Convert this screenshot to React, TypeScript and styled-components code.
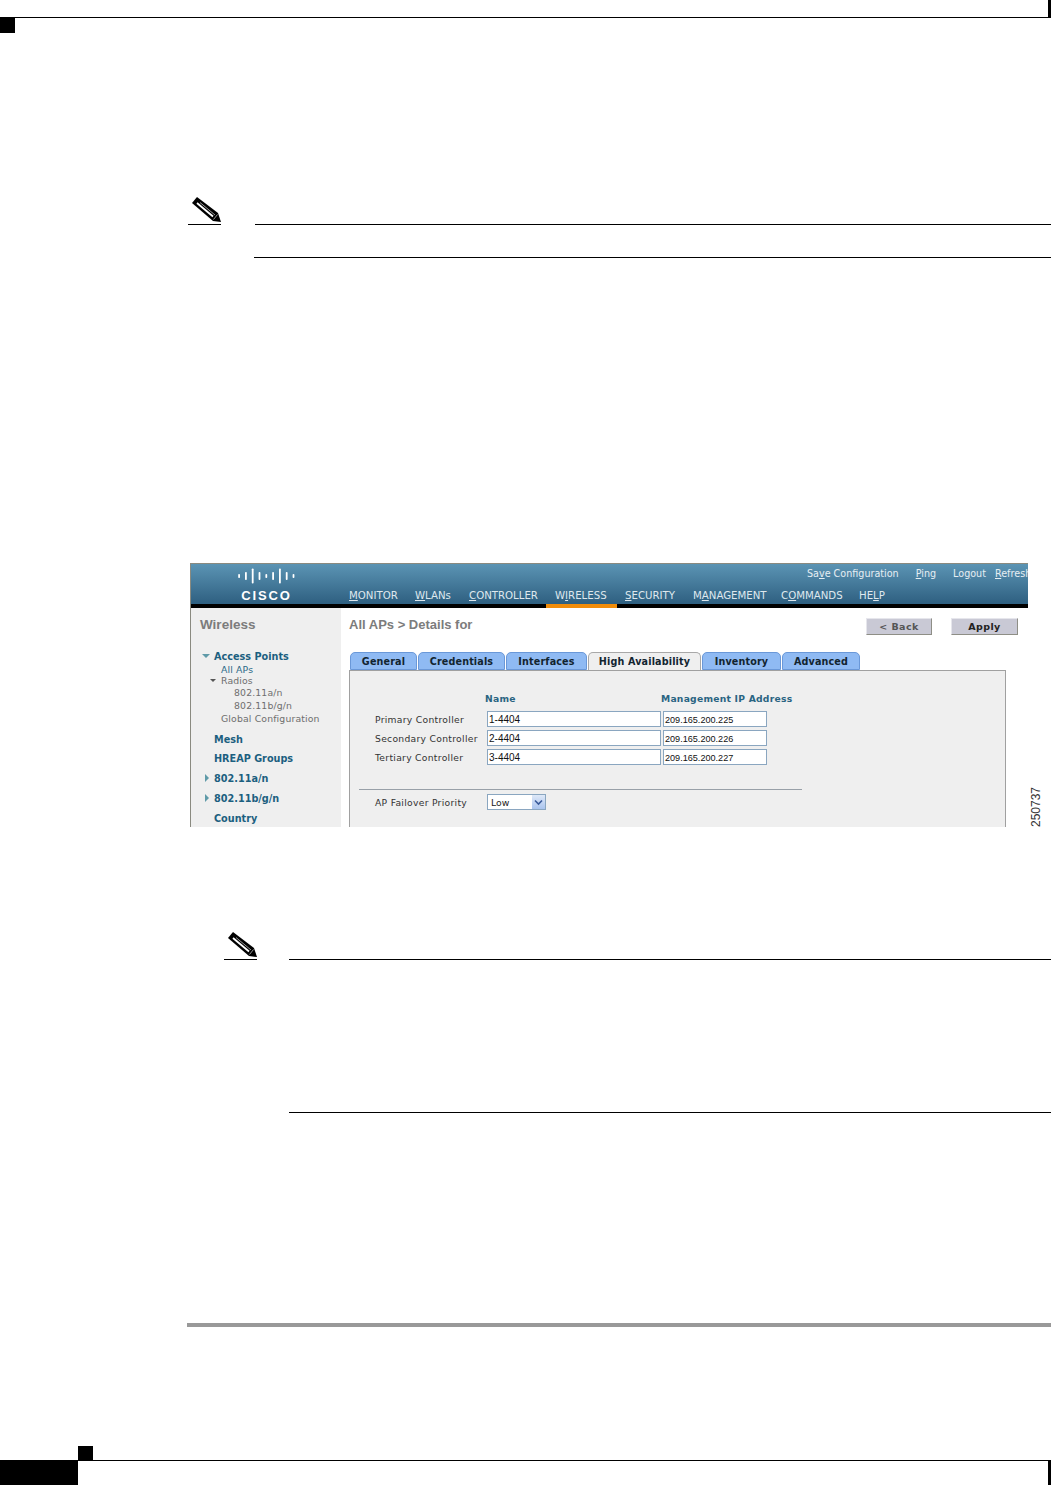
import React from "react";
import styled, { createGlobalStyle } from "styled-components";

const Global = createGlobalStyle`
  html, body { margin: 0; padding: 0; background: #fff; }
  body { font-family: "DejaVu Sans", Verdana, sans-serif; }
`;

const Page = styled.div`
  width: 1051px;
  height: 1485px;
  display: flex;
  flex-direction: column;
  overflow: hidden;
  background: #fff;
`;
const TopBand = styled.div`
  height: 17px;
  display: flex;
  justify-content: flex-end;
`;
const TopRule = styled.div`
  height: 1px;
  background: #000;
`;
const Square = styled.div<{ $left?: number; $h: number; $top?: number }>`
  width: 15px;
  height: ${(p) => p.$h}px;
  margin-left: ${(p) => p.$left ?? 0}px;
  margin-top: ${(p) => p.$top ?? 0}px;
  background: #000;
`;
const Note = styled.div<{ $top: number; $left: number; $h: number }>`
  margin-top: ${(p) => p.$top}px;
  margin-left: ${(p) => p.$left}px;
  height: ${(p) => p.$h}px;
  display: flex;
  align-items: flex-start;
`;
const NoteMark = styled.div`
  width: 33px;
  flex: none;
  height: 28px;
  border-bottom: 1px solid #000;
  box-sizing: border-box;
  svg { display: block; }
`;
const NoteRules = styled.div<{ $gap: number; $left: number }>`
  flex: 1;
  margin-left: ${(p) => p.$left}px;
  margin-top: 27px;
  display: flex;
  flex-direction: column;
  gap: ${(p) => p.$gap}px;
`;
const Rule = styled.div<{ $shift?: number }>`
  height: 1px;
  background: #000;
  margin-left: ${(p) => p.$shift ?? 0}px;
`;
const Figure = styled.div`
  margin-top: 305px;
  margin-left: 190px;
  display: flex;
  align-items: flex-end;
`;
const Shot = styled.div`
  width: 838px;
  height: 264px;
  flex: none;
  display: flex;
  flex-direction: column;
  overflow: hidden;
  border-left: 1px solid #8a8a80;
  border-top: 1px solid #8a8a80;
  box-sizing: border-box;
  background: #fff;
`;
const FigureId = styled.div`
  writing-mode: vertical-rl;
  transform: rotate(180deg);
  font: 12px/12px "Liberation Sans", Arial, sans-serif;
  color: #333;
  margin-left: 2px;
  height: 42px;
`;
const Header = styled.div`
  height: 40px;
  flex: none;
  display: flex;
  background: linear-gradient(#5b94b4, #2e5f80);
`;
const LogoCell = styled.div`
  width: 150px;
  flex: none;
  display: flex;
  flex-direction: column;
  align-items: center;
  padding-top: 4px;
  box-sizing: border-box;
  color: #fff;
  svg { display: block; }
`;
const LogoText = styled.div`
  font: bold 13px/14px "Liberation Sans", Arial, sans-serif;
  letter-spacing: 1.9px;
  margin-top: 5px;
  margin-left: 1px;
`;
const HeaderRight = styled.div`
  flex: 1;
  min-width: 0;
  display: flex;
  flex-direction: column;
`;
const TopLinks = styled.div`
  height: 19px;
  display: flex;
  align-items: center;
  padding-left: 466px;
  white-space: nowrap;
  color: #e6eef3;
  font-size: 9.6px;
`;
const TopSep = styled.span<{ $w: number }>`
  display: inline-block;
  width: 1px;
  height: 10px;
  background: #a9c6d6;
  margin: 0 ${(p) => p.$w}px;
`;
const Nav = styled.div`
  display: flex;
  height: 21px;
`;
const NavItem = styled.div<{ $w: number }>`
  width: ${(p) => p.$w}px;
  flex: none;
  padding-left: 8px;
  box-sizing: border-box;
  font-size: 10.2px;
  line-height: 25px;
  color: #dfe8ee;
  white-space: nowrap;
`;
const U = styled.span`
  text-decoration: underline;
`;
const NavStrip = styled.div`
  height: 4px;
  flex: none;
  background: #000;
  display: flex;
`;
const StripActive = styled.div`
  width: 71px;
  margin-left: 355px;
  background: #f08c0a;
`;
const Body = styled.div`
  flex: 1;
  min-height: 0;
  display: flex;
`;
const Side = styled.div`
  width: 150px;
  flex: none;
  background: #efefef;
  padding-top: 8px;
  box-sizing: border-box;
  overflow: hidden;
`;
const SideTitle = styled.div`
  font: bold 13.5px/18px "Liberation Sans", Arial, sans-serif;
  color: #7c7c7c;
  padding-left: 9px;
  height: 33px;
`;
const SideItem = styled.div<{ $indent: number; $h: number; $tone: "main" | "link" | "sub"; $top?: number }>`
  display: flex;
  align-items: center;
  height: ${(p) => p.$h}px;
  margin-top: ${(p) => p.$top ?? 0}px;
  padding-left: ${(p) => p.$indent}px;
  font-size: ${(p) => (p.$tone === "main" ? "9.7px" : "9.3px")};
  font-weight: ${(p) => (p.$tone === "main" ? 700 : 400)};
  letter-spacing: ${(p) => (p.$tone === "main" ? "0" : "0.15px")};
  color: ${(p) => (p.$tone === "main" ? "#1c5f80" : p.$tone === "link" ? "#2c6a88" : "#6e6e6e")};
  white-space: nowrap;
`;
const Caret = styled.span<{ $dir: "down" | "right"; $color: string; $size: number; $gap: number }>`
  width: 0;
  height: 0;
  flex: none;
  margin-left: ${(p) => -(p.$gap + (p.$dir === "down" ? p.$size * 2 : p.$size))}px;
  margin-right: ${(p) => p.$gap}px;
  ${(p) =>
    p.$dir === "down"
      ? `border-left:${p.$size}px solid transparent;border-right:${p.$size}px solid transparent;border-top:${p.$size}px solid ${p.$color};`
      : `border-top:${p.$size}px solid transparent;border-bottom:${p.$size}px solid transparent;border-left:${p.$size}px solid ${p.$color};`}
`;
const Main = styled.div`
  flex: 1;
  min-width: 0;
  padding-left: 8px;
  display: flex;
  flex-direction: column;
`;
const TitleRow = styled.div`
  height: 44px;
  flex: none;
  display: flex;
  align-items: flex-start;
`;
const Title = styled.div`
  font: bold 13px/18px "Liberation Sans", Arial, sans-serif;
  color: #7c7c7c;
  margin-top: 8px;
  width: 517px;
  flex: none;
`;
const Btn = styled.div<{ $dark?: boolean; $gap: number; $w: number }>`
  width: ${(p) => p.$w}px;
  height: 17px;
  margin-top: 10px;
  margin-left: ${(p) => p.$gap}px;
  box-sizing: border-box;
  background: #c9c9d5;
  border-top: 1px solid #e6e6ec;
  border-left: 1px solid #e6e6ec;
  border-right: 1px solid #8e8e86;
  border-bottom: 1px solid #8e8e86;
  display: flex;
  align-items: center;
  justify-content: center;
  font-size: 9.5px;
  font-weight: 700;
  letter-spacing: 0.4px;
  color: ${(p) => (p.$dark ? "#222" : "#555")};
`;
const Tabs = styled.div`
  height: 18px;
  flex: none;
  display: flex;
  padding-left: 1px;
  gap: 1px;
`;
const Tab = styled.div<{ $w: number; $active?: boolean }>`
  width: ${(p) => p.$w}px;
  flex: none;
  box-sizing: border-box;
  border: 1px solid ${(p) => (p.$active ? "#a8a8a8" : "#6a98d8")};
  border-bottom: ${(p) => (p.$active ? "none" : "1px solid #6a98d8")};
  border-radius: 5px 5px 0 0;
  background: ${(p) => (p.$active ? "#efefef" : "#8fbaf3")};
  font-size: 9.6px;
  font-weight: 700;
  line-height: 17px;
  text-align: center;
  letter-spacing: 0.15px;
  color: #12242f;
  white-space: nowrap;
`;
const Panel = styled.div`
  width: 657px;
  flex: 1;
  box-sizing: border-box;
  background: #efefef;
  border-left: 1px solid #a0a0a0;
  border-right: 1px solid #a0a0a0;
  border-top: 1px solid #a0a0a0;
  padding-top: 22px;
`;
const Grid = styled.div`
  display: grid;
  grid-template-columns: 110px 174px 104px;
  column-gap: 2px;
  row-gap: 3px;
  margin-left: 25px;
  align-items: center;
`;
const ColHead = styled.div`
  font-size: 9.2px;
  font-weight: 700;
  letter-spacing: 0.25px;
  line-height: 12px;
  height: 12px;
  margin-left: -2px;
  margin-bottom: 3px;
  color: #2a6482;
  white-space: nowrap;
`;
const Label = styled.div`
  font-size: 9.2px;
  letter-spacing: 0.3px;
  color: #333;
  white-space: nowrap;
`;
const Field = styled.div<{ $ip?: boolean }>`
  height: 16px;
  box-sizing: border-box;
  background: #fff;
  border: 1px solid #8aa6c0;
  padding-left: 1px;
  font: ${(p) => (p.$ip ? "9.1px" : "10px")}/16px "Liberation Sans", Arial, sans-serif;
  color: #111;
`;
const Divider = styled.div`
  height: 1px;
  width: 443px;
  background: #98a0a8;
  margin: 24px 0 4px 9px;
`;
const FailRow = styled.div`
  display: flex;
  align-items: center;
  margin-left: 25px;
`;
const FailLabel = styled(Label)`
  width: 112px;
  flex: none;
`;
const Select = styled.div`
  width: 59px;
  height: 16px;
  box-sizing: border-box;
  background: #fff;
  border: 1px solid #8aa6c0;
  display: flex;
  align-items: center;
  justify-content: space-between;
  padding-left: 3px;
  font-size: 9.3px;
  color: #222;
`;
const SelectBtn = styled.div`
  width: 13px;
  height: 14px;
  background: linear-gradient(#dfe9f8, #aac4ee);
  display: flex;
  align-items: center;
  justify-content: center;
`;
const ThickRule = styled.div`
  margin-top: 237px;
  margin-left: 187px;
  height: 4px;
  background: #999;
`;
const FootBar = styled.div`
  height: 25px;
  display: flex;
`;
const FootBlock = styled.div`
  width: 78px;
  flex: none;
  background: #000;
`;
const FootLine = styled.div`
  flex: 1;
  border-top: 1px solid #000;
  display: flex;
  justify-content: flex-end;
`;
const EdgeTick = styled.div`
  width: 3px;
  background: #000;
`;

const Pencil = () => (
  <svg width="33" height="27" viewBox="0 0 33 27">
    <path d="M9 0 L4 6 L25 24 L33 25 L30 16 Z" fill="#000" />
    <path d="M9 6 L25 19.5" stroke="#fff" strokeWidth="1.8" fill="none" />
    <path d="M12 5.5 L27 18" stroke="#999" strokeWidth="1" fill="none" />
    <path d="M25.5 22.5 L29.5 17.5" stroke="#999" strokeWidth="1" fill="none" />
  </svg>
);

const CiscoBars = () => (
  <svg width="58" height="16" viewBox="0 0 58 16" fill="#fff">
    {[4, 8, 15, 8, 4, 8, 15, 8, 4].map((h, i) => (
      <rect key={i} x={1.2 + i * 6.8} y={8 - h / 2} width="1.8" height={h} rx="0.8" />
    ))}
  </svg>
);

const Chevron = () => (
  <svg width="9" height="7" viewBox="0 0 9 7">
    <path d="M1 1.5 L4.5 5 L8 1.5" stroke="#3a5a9a" strokeWidth="1.6" fill="none" />
  </svg>
);

const tabs: [number, string, boolean?][] = [
  [67, "General"],
  [87, "Credentials"],
  [81, "Interfaces"],
  [113, "High Availability", true],
  [79, "Inventory"],
  [78, "Advanced"],
];

const rows = [
  ["Primary Controller", "1-4404", "209.165.200.225"],
  ["Secondary Controller", "2-4404", "209.165.200.226"],
  ["Tertiary Controller", "3-4404", "209.165.200.227"],
];

export default function App() {
  return (
    <Page>
      <Global />
      <TopBand><EdgeTick /></TopBand>
      <TopRule />
      <Square $h={15} />
      <Note $top={164} $left={188} $h={61}>
        <NoteMark><Pencil /></NoteMark>
        <NoteRules $left={34} $gap={32}>
          <Rule />
          <Rule $shift={-1} />
        </NoteRules>
      </Note>
      <Figure>
        <Shot>
          <Header>
            <LogoCell>
              <CiscoBars />
              <LogoText>CISCO</LogoText>
            </LogoCell>
            <HeaderRight>
              <TopLinks>
                <span>Sa<U>v</U>e Configuration</span>
                <TopSep $w={8.5} />
                <span><U>P</U>ing</span>
                <TopSep $w={8.5} />
                <span>Lo<U>g</U>out</span>
                <TopSep $w={4.5} />
                <span><U>R</U>efresh</span>
              </TopLinks>
              <Nav>
                <NavItem $w={66}><U>M</U>ONITOR</NavItem>
                <NavItem $w={54}><U>W</U>LANs</NavItem>
                <NavItem $w={86}><U>C</U>ONTROLLER</NavItem>
                <NavItem $w={70}>W<U>I</U>RELESS</NavItem>
                <NavItem $w={68}><U>S</U>ECURITY</NavItem>
                <NavItem $w={88}>M<U>A</U>NAGEMENT</NavItem>
                <NavItem $w={78}>C<U>O</U>MMANDS</NavItem>
                <NavItem $w={40}>HE<U>L</U>P</NavItem>
              </Nav>
            </HeaderRight>
          </Header>
          <NavStrip><StripActive /></NavStrip>
          <Body>
            <Side>
              <SideTitle>Wireless</SideTitle>
              <SideItem $indent={23} $h={14} $tone="main">
                <Caret $dir="down" $size={4} $color="#5f9aa8" $gap={4} />
                Access Points
              </SideItem>
              <SideItem $indent={30} $h={12} $tone="link">All APs</SideItem>
              <SideItem $indent={30} $h={11} $tone="sub">
                <Caret $dir="down" $size={3} $color="#555" $gap={5} />
                Radios
              </SideItem>
              <SideItem $indent={43} $h={13} $tone="sub">802.11a/n</SideItem>
              <SideItem $indent={43} $h={13} $tone="sub">802.11b/g/n</SideItem>
              <SideItem $indent={30} $h={13} $tone="sub">Global Configuration</SideItem>
              <SideItem $indent={23} $h={20} $top={4} $tone="main">Mesh</SideItem>
              <SideItem $indent={23} $h={19} $tone="main">HREAP Groups</SideItem>
              <SideItem $indent={23} $h={20} $tone="main">
                <Caret $dir="right" $size={4} $color="#5f9aa8" $gap={5} />
                802.11a/n
              </SideItem>
              <SideItem $indent={23} $h={20} $tone="main">
                <Caret $dir="right" $size={4} $color="#5f9aa8" $gap={5} />
                802.11b/g/n
              </SideItem>
              <SideItem $indent={23} $h={20} $tone="main">Country</SideItem>
            </Side>
            <Main>
              <TitleRow>
                <Title>All APs &gt; Details for</Title>
                <Btn $gap={0} $w={66}>&lt; Back</Btn>
                <Btn $gap={19} $w={67} $dark>Apply</Btn>
              </TitleRow>
              <Tabs>
                {tabs.map(([w, t, a]) => (
                  <Tab key={t} $w={w} $active={a}>{t}</Tab>
                ))}
              </Tabs>
              <Panel>
                <Grid>
                  <span />
                  <ColHead>Name</ColHead>
                  <ColHead>Management IP Address</ColHead>
                  {rows.map(([l, n, ip]) => (
                    <React.Fragment key={l}>
                      <Label>{l}</Label>
                      <Field>{n}</Field>
                      <Field $ip>{ip}</Field>
                    </React.Fragment>
                  ))}
                </Grid>
                <Divider />
                <FailRow>
                  <FailLabel>AP Failover Priority</FailLabel>
                  <Select>
                    Low
                    <SelectBtn><Chevron /></SelectBtn>
                  </Select>
                </FailRow>
              </Panel>
            </Main>
          </Body>
        </Shot>
        <FigureId>250737</FigureId>
      </Figure>
      <Note $top={105} $left={224} $h={154}>
        <NoteMark><Pencil /></NoteMark>
        <NoteRules $left={32} $gap={152}>
          <Rule />
          <Rule />
        </NoteRules>
      </Note>
      <ThickRule />
      <Square $left={78} $h={14} $top={119} />
      <FootBar>
        <FootBlock />
        <FootLine><EdgeTick /></FootLine>
      </FootBar>
    </Page>
  );
}
